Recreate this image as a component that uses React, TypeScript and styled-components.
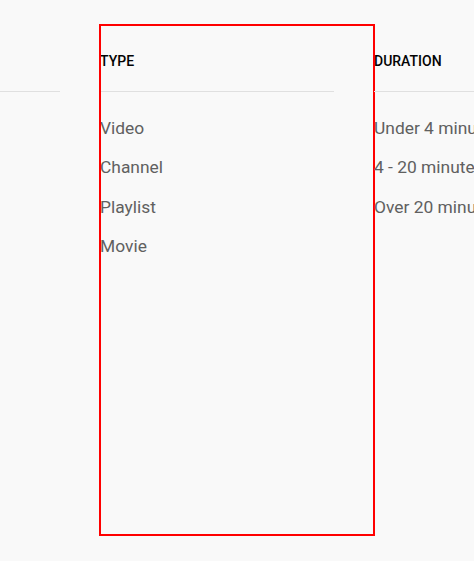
import React from "react";
import styled, { createGlobalStyle } from "styled-components";

const Global = createGlobalStyle`
  html, body {
    margin: 0;
    padding: 0;
    background: #f9f9f9;
    overflow: hidden;
  }
  body {
    font-family: Roboto, "Noto Sans", Arial, sans-serif;
  }
`;

const Page = styled.div`
  width: 474px;
  height: 561px;
  overflow: hidden;
  background: #f9f9f9;
`;

const FilterRow = styled.div`
  display: flex;
  flex-direction: row;
  margin-left: -174px;
  padding-top: 25px;
`;

const Group = styled.div<{ $highlight?: boolean }>`
  flex: 0 0 274px;
  box-sizing: border-box;
  width: 274px;
  height: 510px;
  padding-right: 40px;
  outline: ${(p) => (p.$highlight ? "2px solid #ff0000" : "none")};
  outline-offset: -1px;
`;

const GroupTitle = styled.h4`
  margin: 0;
  padding: 26px 0 20px;
  font-size: 14px;
  line-height: 20px;
  font-weight: 500;
  color: #030303;
  text-transform: uppercase;
  border-bottom: 1px solid #e0e0e0;
  white-space: nowrap;
`;

const OptionList = styled.div`
  display: flex;
  flex-direction: column;
  padding-top: 16.5px;
`;

const Option = styled.a`
  display: block;
  font-size: 17.4px;
  line-height: 39.5px;
  height: 39.5px;
  color: #606060;
  text-decoration: none;
  white-space: nowrap;
  cursor: pointer;
`;

const groups = [
  {
    title: "Upload date",
    options: ["Last hour", "Today", "This week", "This month", "This year"],
  },
  { title: "Type", options: ["Video", "Channel", "Playlist", "Movie"], highlight: true },
  {
    title: "Duration",
    options: ["Under 4 minutes", "4 - 20 minutes", "Over 20 minutes"],
  },
  {
    title: "Features",
    options: ["Live", "4K", "HD", "Subtitles/CC", "Creative Commons"],
  },
];

export default function App() {
  return (
    <Page>
      <Global />
      <FilterRow>
        {groups.map((g) => (
          <Group key={g.title} $highlight={g.highlight}>
            <GroupTitle>{g.title}</GroupTitle>
            <OptionList>
              {g.options.map((o) => (
                <Option key={o}>{o}</Option>
              ))}
            </OptionList>
          </Group>
        ))}
      </FilterRow>
    </Page>
  );
}
